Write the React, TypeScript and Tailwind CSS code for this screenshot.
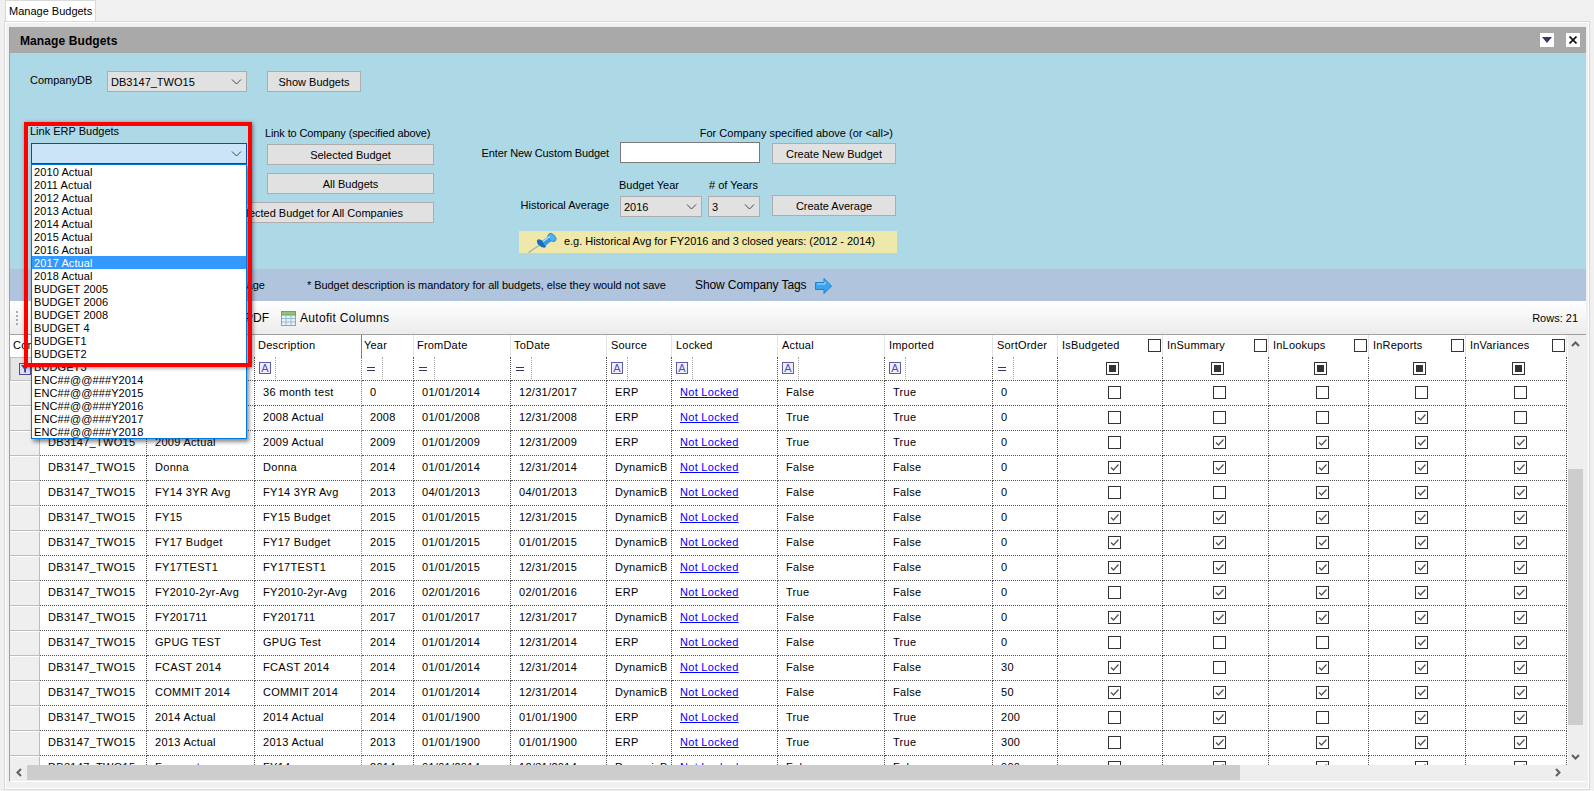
import React from "react";

const listItems = ["2010 Actual","2011 Actual","2012 Actual","2013 Actual","2014 Actual","2015 Actual","2016 Actual","2017 Actual","2018 Actual","BUDGET 2005","BUDGET 2006","BUDGET 2008","BUDGET 4","BUDGET1","BUDGET2","BUDGET3","ENC##@@###Y2014","ENC##@@###Y2015","ENC##@@###Y2016","ENC##@@###Y2017","ENC##@@###Y2018"];

type Row = [string, string, string, string, string, string, string, string, string, string, string, number[]];
const rows: Row[] = [
  ["DB3147_TWO15","36 month test","36 month test","0","01/01/2014","12/31/2017","ERP","False","True","0","",[0,0,0,0,0]],
  ["DB3147_TWO15","2008 Actual","2008 Actual","2008","01/01/2008","12/31/2008","ERP","True","True","0","",[0,0,0,1,0]],
  ["DB3147_TWO15","2009 Actual","2009 Actual","2009","01/01/2009","12/31/2009","ERP","True","True","0","",[0,1,1,1,1]],
  ["DB3147_TWO15","Donna","Donna","2014","01/01/2014","12/31/2014","DynamicB","False","False","0","",[1,1,1,1,1]],
  ["DB3147_TWO15","FY14 3YR Avg","FY14 3YR Avg","2013","04/01/2013","04/01/2013","DynamicB","False","False","0","",[0,0,1,1,1]],
  ["DB3147_TWO15","FY15","FY15 Budget","2015","01/01/2015","12/31/2015","DynamicB","False","False","0","",[1,1,1,1,1]],
  ["DB3147_TWO15","FY17 Budget","FY17 Budget","2015","01/01/2015","01/01/2015","DynamicB","False","False","0","",[1,1,1,1,1]],
  ["DB3147_TWO15","FY17TEST1","FY17TEST1","2015","01/01/2015","12/31/2015","DynamicB","False","False","0","",[1,1,1,1,1]],
  ["DB3147_TWO15","FY2010-2yr-Avg","FY2010-2yr-Avg","2016","02/01/2016","02/01/2016","ERP","True","False","0","",[0,1,1,1,1]],
  ["DB3147_TWO15","FY201711","FY201711","2017","01/01/2017","12/31/2017","DynamicB","False","False","0","",[1,1,1,1,1]],
  ["DB3147_TWO15","GPUG TEST","GPUG Test","2014","01/01/2014","12/31/2014","ERP","False","True","0","",[0,0,0,1,1]],
  ["DB3147_TWO15","FCAST 2014","FCAST 2014","2014","01/01/2014","12/31/2014","DynamicB","False","False","30","",[1,0,1,1,1]],
  ["DB3147_TWO15","COMMIT 2014","COMMIT 2014","2014","01/01/2014","12/31/2014","DynamicB","False","False","50","",[1,1,1,1,1]],
  ["DB3147_TWO15","2014 Actual","2014 Actual","2014","01/01/1900","01/01/1900","ERP","True","True","200","",[0,1,0,1,1]],
  ["DB3147_TWO15","2013 Actual","2013 Actual","2013","01/01/1900","01/01/1900","ERP","True","True","300","",[0,1,1,1,1]],
  ["DB3147_TWO15","Forecast","FY14","2014","01/01/2014","12/31/2014","DynamicB","False","False","900","",[0,1,1,1,1]],
];

const Chevron = () => (
  <svg width="11" height="6" viewBox="0 0 11 6" className="shrink-0"><path d="M1 0.5 L5.5 5 L10 0.5" fill="none" stroke="#444" strokeWidth="1" /></svg>
);

function Btn({ children, className }: { children: React.ReactNode; className: string }) {
  return <div className={"flex items-center justify-center pt-px bg-[#e1e1e1] border border-[#adadad] whitespace-nowrap " + className}>{children}</div>;
}

function Sel({ value, className }: { value: string; className: string }) {
  return (
    <div className={"flex items-center justify-between bg-[#e1e1e1] border border-[#adadad] pl-[3px] pr-[4px] " + className}>
      <span className="pt-px">{value}</span><Chevron />
    </div>
  );
}

function Box({ state }: { state: number }) {
  return (
    <span className="relative flex items-center justify-center w-[13px] h-[13px] bg-white border border-[#333] shrink-0">
      {state === 1 && (
        <svg width="11" height="11" viewBox="0 0 11 11"><path d="M2 5.5 L4.5 8 L9.5 2.5" fill="none" stroke="#555" strokeWidth="1.3" /></svg>
      )}
      {state === 2 && <span className="w-[7px] h-[7px] bg-[#333]" />}
    </span>
  );
}

function AIcon() {
  return (
    <span className="flex h-full w-[17px] items-center border-r border-dotted border-[#aaa] shrink-0">
      <span className="flex items-center justify-center w-[12px] h-[12px] bg-[#f0f0fa] border border-[#5c5ca8] text-[#5050c4] text-[11px] leading-none">A</span>
    </span>
  );
}

function EqIcon() {
  return (
    <span className="flex h-full w-[17px] items-center border-r border-dotted border-[#aaa] shrink-0 pl-[1px]">
      <span className="block w-[8px] h-[4px] mt-[2px] border-y border-[#33336e]" />
    </span>
  );
}

const headerBase = "flex items-center h-[22px] pb-[2px] bg-white border-r border-[#e4e4e4] overflow-hidden whitespace-nowrap tracking-[0.2px]";
const filterBase = "flex items-center h-[24px] pb-px pl-[4px] bg-white border-r border-b border-dotted border-[#555] overflow-hidden";
const cellBase = "flex items-center h-[25px] pb-px pl-[8px] bg-white border-r border-b border-dotted border-[#555] overflow-hidden whitespace-nowrap tracking-[0.3px]";

function Header({ label, box, pad = "pl-[4px]" }: { label: string; box?: boolean; pad?: string }) {
  return (
    <div className={headerBase + " justify-between pr-[1px] " + pad}>
      <span>{label}</span>
      {box && <Box state={0} />}
    </div>
  );
}

function PinIcon() {
  return (
    <svg width="29" height="22" viewBox="0 0 29 22" className="shrink-0">
      <path d="M0.5 21.5 L11 14.5" stroke="#a9b1b8" strokeWidth="1.4" />
      <ellipse cx="13.5" cy="12.5" rx="3" ry="5.5" transform="rotate(-50 13.5 12.5)" fill="#1b6fbd" />
      <path d="M14 10 L22 4 L25 9 L17 15 Z" fill="#3a9ae6" />
      <ellipse cx="24" cy="6.5" rx="3.2" ry="4.8" transform="rotate(-45 24 6.5)" fill="#4fb0f0" stroke="#1e73c0" strokeWidth="0.6" />
      <path d="M15 10.5 L22 5.5" stroke="#bfe3fb" strokeWidth="1.1" />
    </svg>
  );
}

function ArrowIcon() {
  return (
    <svg width="17" height="16" viewBox="0 0 17 16" className="shrink-0">
      <path d="M0.5 4.5 H9 V0.5 L16.5 8 L9 15.5 V11.5 H0.5 Z" fill="#39a5ee" stroke="#1f7fd0" strokeWidth="1" />
      <path d="M2 6 H10 V3.5" fill="none" stroke="#a5dcfb" strokeWidth="1" />
    </svg>
  );
}

function GridIcon() {
  return (
    <svg width="15" height="15" viewBox="0 0 15 15" className="shrink-0">
      <rect x="0.5" y="0.5" width="14" height="14" fill="#e6f1fa" stroke="#8fa5b5" />
      <rect x="0.5" y="0.5" width="14" height="3.5" fill="#8fc47a" stroke="#6ea35a" />
      <path d="M5 4 V14 M10 4 V14 M1 7.5 H14 M1 11 H14" stroke="#9dbad0" strokeWidth="1" />
    </svg>
  );
}

function Grip() {
  return <span className="flex flex-col gap-[2px] shrink-0">{[0,1,2,3].map((i) => <span key={i} className="w-[2px] h-[2px] bg-[#aaa]" />)}</span>;
}

export default function App() {
  return (
    <div className="w-[1594px] h-[791px] overflow-hidden bg-[#f0f0f0] text-black text-[11px] leading-[13px] font-['Liberation_Sans',Arial,sans-serif]">
      <div className="flex h-[21px] pl-[5px]">
        <div className="flex items-center pl-[3px] w-[91px] h-[21px] bg-white border border-b-0 border-[#d9d9d9]">Manage Budgets</div>
      </div>
      <div className="mx-[4px] h-[769px] border border-[#d9d9d9] bg-white p-px">
        <div className="h-full bg-[#f0f0f0] px-[3px] pt-[4px]">
          <div className="flex flex-col w-[1577px] h-[755px] bg-[#efefef] border-l border-b border-l-[#a0a0a0] border-b-white">
            {/* title */}
            <div className="flex items-center h-[26px] bg-[#a9a9a9] pl-[10px] shrink-0">
              <span className="font-bold text-[12px] tracking-[0.1px] pt-[2px]">Manage Budgets</span>
              <span className="ml-auto flex items-center justify-center w-[14px] h-[14px] bg-white">
                <svg width="10" height="6" viewBox="0 0 10 6"><path d="M0 0 H10 L5 6 Z" fill="#3b3567" /></svg>
              </span>
              <span className="ml-[12px] mr-[6px] flex items-center justify-center w-[14px] h-[14px] bg-white">
                <svg width="8" height="8" viewBox="0 0 8 8"><path d="M0.5 0.5 L7.5 7.5 M7.5 0.5 L0.5 7.5" stroke="#111" strokeWidth="1.7" /></svg>
              </span>
            </div>

            {/* blue */}
            <div className="relative z-10 h-[216px] shrink-0 bg-[#add8e6]">
              <div className="flex items-center pt-[18px] pl-[21px]">
                <span className="w-[76px] -ml-[1px] mr-[1px] pb-[2px]">CompanyDB</span>
                <Sel value="DB3147_TWO15" className="w-[140px] h-[21px]" />
                <Btn className="ml-[20px] w-[94px] h-[21px]">Show Budgets</Btn>
              </div>
              <div className="relative flex mt-[30px] pl-[21px]">
                <div className="relative w-[216px] shrink-0 pt-[3px]">
                  <div className="-ml-[1px] h-[13px]">Link ERP Budgets</div>
                  <div className="relative mt-[5px]">
                    <div className="flex items-center justify-end h-[21px] bg-[#cce4f7] border border-[#005499] pr-[4px]"><Chevron /></div>
                    <div className="absolute z-20 left-0 top-full w-[216px] h-[275px] bg-white border border-[#0078d7] shadow-[2px_3px_4px_rgba(0,0,0,0.45)] overflow-hidden">
                      {listItems.map((t, i) => (
                        <div key={t} className={"h-[13px] pl-[2px] leading-[14px] tracking-[0.1px] " + (i === 7 ? "bg-[#3399ff] text-white" : "")}>{t}</div>
                      ))}
                    </div>
                  </div>
                </div>
                <div className="w-[167px] ml-[20px] shrink-0 pt-[5px]">
                  <div className="-ml-[2px] h-[13px] whitespace-nowrap tracking-[-0.12px]">Link to Company (specified above)</div>
                  <Btn className="mt-[4px] h-[21px]">Selected Budget</Btn>
                  <Btn className="mt-[8px] h-[21px]">All Budgets</Btn>
                  <Btn className="mt-[8px] -ml-[67px] w-[234px] h-[21px] pl-[2px]">Selected Budget for All Companies</Btn>
                </div>
                <div className="ml-[48px] w-[415px] shrink-0 pt-[5px]">
                  <div className="h-[13px] text-right pr-[4px]">For Company specified above (or &lt;all&gt;)</div>
                  <div className="flex mt-[2px] h-[22px]">
                    <span className="flex justify-end w-[127px] pt-[5px] whitespace-nowrap tracking-[-0.12px]">Enter New Custom Budget</span>
                    <span className="ml-[11px] w-[140px] h-[21px] bg-white border border-[#7a7a7a]" />
                    <Btn className="ml-[12px] mt-[1px] w-[124px] h-[21px]">Create New Budget</Btn>
                  </div>
                  <div className="flex mt-[14px] h-[13px] pt-px pl-[137px]">
                    <span className="w-[90px]">Budget Year</span>
                    <span>&#35; of Years</span>
                  </div>
                  <div className="flex mt-[4px] h-[22px]">
                    <span className="w-[127px] text-right pt-[4px]">Historical Average</span>
                    <Sel value="2016" className="ml-[11px] mt-[1px] w-[82px] h-[21px]" />
                    <Sel value="3" className="ml-[6px] mt-[1px] w-[52px] h-[21px]" />
                    <Btn className="ml-[12px] w-[124px] h-[21px]">Create Average</Btn>
                  </div>
                  <div className="flex items-center mt-[14px] ml-[37px] w-[378px] h-[22px] bg-[#eee8aa] pl-[9px]">
                    <PinIcon />
                    <span className="ml-[7px] pb-px tracking-[-0.03px]">e.g. Historical Avg for FY2016 and 3 closed years: (2012 - 2014)</span>
                  </div>
                </div>
                {/* red annotation rectangle */}
                <div className="absolute z-30 left-[14px] top-0 w-[228px] h-[245px] border-[4px] border-[#ff0000] shadow-[1px_1px_4px_rgba(0,0,0,0.45)] pointer-events-none" />
              </div>
            </div>

            {/* tag band */}
            <div className="flex items-center h-[32px] pt-px shrink-0 bg-[#b0c4de]">
              <span className="w-[255px] text-right whitespace-nowrap">Show Budget Usage</span>
              <span className="ml-[42px] w-[388px] tracking-[-0.06px]">* Budget description is mandatory for all budgets, else they would not save</span>
              <span className="text-[12px] tracking-[-0.1px]">Show Company Tags</span>
              <span className="ml-[9px]"><ArrowIcon /></span>
            </div>

            {/* toolbar */}
            <div className="flex items-center h-[33px] pt-px shrink-0 pl-[6px] pr-[8px] bg-gradient-to-b from-white to-[#ececec] text-[12px]">
              <Grip />
              <span className="w-[251px] text-right">Export to PDF</span>
              <span className="ml-[12px]"><GridIcon /></span>
              <span className="ml-[4px] tracking-[0.3px]">Autofit Columns</span>
              <span className="ml-auto text-[11px]">Rows: 21</span>
            </div>

            {/* grid */}
            <div className="flex h-[431px] shrink-0 border-t border-[#a0a0a0]">
              <div className="w-[1558px] h-[430px] bg-white overflow-hidden">
                <div className="grid grid-cols-[30px_107px_108px_107px_52px_97px_96px_65px_106px_107px_108px_65px_105px_106px_100px_97px_101px]">
                  <div className={headerBase + " col-span-2 pl-[3px]"}>CompanyDB</div>
                  <Header label="Budget" />
                  <div className={headerBase + " pl-[3px] border-r-[#808080]"}>Description</div>
                  <Header label="Year" pad="pl-[2px]" />
                  <Header label="FromDate" pad="pl-[3px]" />
                  <Header label="ToDate" pad="pl-[3px]" />
                  <Header label="Source" />
                  <Header label="Locked" />
                  <Header label="Actual" />
                  <Header label="Imported" />
                  <Header label="SortOrder" />
                  <Header label="IsBudgeted" box />
                  <Header label="InSummary" box />
                  <Header label="InLookups" box />
                  <Header label="InReports" box />
                  <Header label="InVariances" box />

                  <div className="flex items-center justify-center h-[24px] bg-[#e6e6e6] border border-[#c0c0c0]">
                    <svg width="12" height="12" viewBox="0 0 12 12"><rect x="0.5" y="0.5" width="11" height="11" fill="#dfe0f3" stroke="#4b4ba0" /><path d="M2 2 H10 L7 6 V10 L5 9 V6 Z" fill="#4b4ba0" /></svg>
                  </div>
                  <div className={filterBase}><AIcon /></div>
                  <div className={filterBase}><AIcon /></div>
                  <div className={filterBase + " border-r-[#808080]"}><AIcon /></div>
                  <div className={filterBase}><EqIcon /></div>
                  <div className={filterBase}><EqIcon /></div>
                  <div className={filterBase}><EqIcon /></div>
                  <div className={filterBase}><AIcon /></div>
                  <div className={filterBase}><AIcon /></div>
                  <div className={filterBase}><AIcon /></div>
                  <div className={filterBase}><AIcon /></div>
                  <div className={filterBase}><EqIcon /></div>
                  {[0,1,2,3,4].map((i) => (
                    <div key={i} className={filterBase + " justify-center pl-0"}><Box state={2} /></div>
                  ))}

                  {rows.map((r, idx) => (
                    <React.Fragment key={idx}>
                      <div className="h-[25px] bg-[#efefef] border-b border-r border-[#bdbdbd] border-t border-t-white" />
                      <div className={cellBase}>{r[0]}</div>
                      <div className={cellBase}>{r[1]}</div>
                      <div className={cellBase + " border-r-solid border-r-[#808080]"}>{r[2]}</div>
                      <div className={cellBase + " pl-[7px]"}>{r[3]}</div>
                      <div className={cellBase + " pl-[7px]"}>{r[4]}</div>
                      <div className={cellBase + " pl-[7px]"}>{r[5]}</div>
                      <div className={cellBase}>{r[6]}</div>
                      <div className={cellBase}><span className="text-[#0000ff] underline">Not Locked</span></div>
                      <div className={cellBase}>{r[7]}</div>
                      <div className={cellBase}>{r[8]}</div>
                      <div className={cellBase}>{r[9]}</div>
                      {r[11].map((v, j) => (
                        <div key={j} className={cellBase + " justify-center pl-0"}><Box state={v} /></div>
                      ))}
                    </React.Fragment>
                  ))}
                </div>
              </div>
              {/* vertical scrollbar */}
              <div className="relative flex flex-col w-[15px] h-[430px] bg-[#eeeeee] shrink-0">
                <div className="flex items-center justify-center h-[134px] pb-[116px]">
                  <svg width="9" height="6" viewBox="0 0 9 6"><path d="M1 5 L4.5 1.5 L8 5" fill="none" stroke="#606060" strokeWidth="2" /></svg>
                </div>
                <div className="h-[256px] bg-[#cdcdcd]" />
                <div className="flex items-center justify-center h-[40px] pt-[24px]">
                  <svg width="9" height="6" viewBox="0 0 9 6"><path d="M1 1 L4.5 4.5 L8 1" fill="none" stroke="#606060" strokeWidth="2" /></svg>
                </div>
              </div>
            </div>

            {/* horizontal scrollbar */}
            <div className="flex h-[15px] w-[1573px] bg-[#eeeeee] shrink-0">
              <div className="flex items-center justify-center w-[17px]">
                <svg width="6" height="9" viewBox="0 0 6 9"><path d="M5 1 L1.5 4.5 L5 8" fill="none" stroke="#606060" strokeWidth="2" /></svg>
              </div>
              <div className="w-[1213px] bg-[#cdcdcd]" />
              <div className="flex flex-1 items-center justify-end pr-[22px]">
                <svg width="6" height="9" viewBox="0 0 6 9"><path d="M1 1 L4.5 4.5 L1 8" fill="none" stroke="#606060" strokeWidth="2" /></svg>
              </div>
            </div>
          </div>
        </div>
      </div>
    </div>
  );
}
